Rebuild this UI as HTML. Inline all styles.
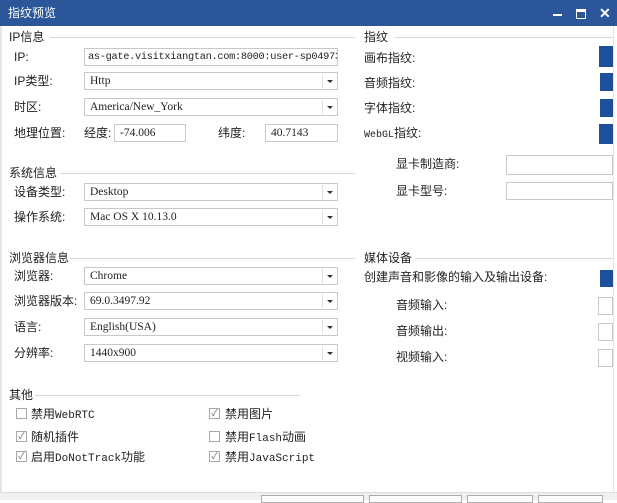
<!DOCTYPE html>
<html><head><meta charset="utf-8"><style>
*{margin:0;padding:0;box-sizing:border-box}
body{width:617px;height:500px;position:relative;overflow:hidden;background:#fff;font-family:"Liberation Sans","Noto Sans CJK SC",sans-serif;font-size:12px;color:#222}
.a{position:absolute;white-space:nowrap}
.t{position:absolute;white-space:nowrap;line-height:14px}
.mono{font-family:"Liberation Mono","Noto Sans CJK SC",monospace;font-size:11px}
.in{position:absolute;border:1px solid #c8c8c8;background:#fff;height:18px;line-height:16px;padding-left:5px;font-family:"Liberation Serif","Noto Serif CJK SC",serif;font-size:11.5px;overflow:hidden;white-space:nowrap}
.sel .arr{position:absolute;right:1px;top:1px;width:14px;height:14px;border-left:1px solid #e0e0e0}
.sel .arr:after{content:"";position:absolute;left:4px;top:6px;border-left:3px solid transparent;border-right:3px solid transparent;border-top:3px solid #333}
.ln{position:absolute;height:1px;background:#d8d8d8}
.sq{position:absolute;background:#1d4f9a}
.cb{position:absolute;width:11px;height:11px;border:1px solid #a8a8a8;background:#fff;font-size:9px;line-height:9px;text-align:center;color:#666}
.btn{position:absolute;top:495px;height:8px;border:1px solid #adadad;background:#fdfdfd}
</style></head><body>
<div class="a" style="left:0;top:0;width:617px;height:26px;background:#2b579a"></div>
<div class="t" style="left:8px;top:6px;color:#fff;font-size:12px">指纹预览</div>
<div class="a" style="left:553px;top:14px;width:9px;height:2px;background:#fff"></div>
<div class="a" style="left:576px;top:9px;width:10px;height:10px;border:1.5px solid #fff;border-top-width:3px"></div>
<div class="t" style="left:599px;top:6px;color:#fff;font-size:14px;font-weight:bold">✕</div>
<div class="a" style="left:0;top:26px;width:2px;height:470px;background:#e6e6e6"></div>
<div class="a" style="left:613px;top:26px;width:1px;height:470px;background:#e6e6e6"></div>

<div class="t" style="left:9px;top:30px">IP信息</div>
<div class="ln" style="left:50px;top:37px;width:305px"></div>
<div class="t" style="left:14px;top:50px">IP:</div>
<div class="in" style="left:84px;top:48px;width:254px;font-family:'Liberation Mono',monospace;font-size:10.3px;letter-spacing:-0.3px;padding-left:3px">as-gate.visitxiangtan.com:8000:user-sp04973090-c</div>
<div class="t" style="left:14px;top:74px">IP类型:</div>
<div class="in sel" style="left:84px;top:72px;width:254px">Http<span class="arr"></span></div>
<div class="t" style="left:14px;top:100px">时区:</div>
<div class="in sel" style="left:84px;top:98px;width:254px">America/New_York<span class="arr"></span></div>
<div class="t" style="left:14px;top:126px">地理位置:</div>
<div class="t" style="left:84px;top:126px">经度:</div>
<div class="in" style="left:114px;top:124px;width:72px">-74.006</div>
<div class="t" style="left:218px;top:126px">纬度:</div>
<div class="in" style="left:265px;top:124px;width:73px">40.7143</div>

<div class="t" style="left:9px;top:166px">系统信息</div>
<div class="ln" style="left:60px;top:173px;width:295px"></div>
<div class="t" style="left:14px;top:185px">设备类型:</div>
<div class="in sel" style="left:84px;top:183px;width:254px">Desktop<span class="arr"></span></div>
<div class="t" style="left:14px;top:210px">操作系统:</div>
<div class="in sel" style="left:84px;top:208px;width:254px">Mac OS X 10.13.0<span class="arr"></span></div>

<div class="t" style="left:9px;top:251px">浏览器信息</div>
<div class="ln" style="left:70px;top:258px;width:285px"></div>
<div class="t" style="left:14px;top:269px">浏览器:</div>
<div class="in sel" style="left:84px;top:267px;width:254px">Chrome<span class="arr"></span></div>
<div class="t" style="left:14px;top:294px">浏览器版本:</div>
<div class="in sel" style="left:84px;top:292px;width:254px">69.0.3497.92<span class="arr"></span></div>
<div class="t" style="left:14px;top:320px">语言:</div>
<div class="in sel" style="left:84px;top:318px;width:254px">English(USA)<span class="arr"></span></div>
<div class="t" style="left:14px;top:346px">分辨率:</div>
<div class="in sel" style="left:84px;top:344px;width:254px">1440x900<span class="arr"></span></div>

<div class="t" style="left:9px;top:388px">其他</div>
<div class="ln" style="left:35px;top:395px;width:265px"></div>
<div class="cb" style="left:16px;top:408px"></div><div class="t mono" style="left:31px;top:407px"><span style="font-size:12px;font-family:'Noto Sans CJK SC'">禁用</span>WebRTC</div>
<div class="cb" style="left:16px;top:431px">✓</div><div class="t" style="left:31px;top:430px">随机插件</div>
<div class="cb" style="left:16px;top:451px">✓</div><div class="t mono" style="left:31px;top:450px"><span style="font-size:12px;font-family:'Noto Sans CJK SC'">启用</span>DoNotTrack<span style="font-size:12px;font-family:'Noto Sans CJK SC'">功能</span></div>
<div class="cb" style="left:209px;top:408px">✓</div><div class="t" style="left:225px;top:407px">禁用图片</div>
<div class="cb" style="left:209px;top:431px"></div><div class="t mono" style="left:225px;top:430px"><span style="font-size:12px;font-family:'Noto Sans CJK SC'">禁用</span>Flash<span style="font-size:12px;font-family:'Noto Sans CJK SC'">动画</span></div>
<div class="cb" style="left:209px;top:451px">✓</div><div class="t mono" style="left:225px;top:450px"><span style="font-size:12px;font-family:'Noto Sans CJK SC'">禁用</span>JavaScript</div>

<div class="t" style="left:364px;top:30px">指纹</div>
<div class="ln" style="left:395px;top:37px;width:218px"></div>
<div class="t" style="left:364px;top:51px">画布指纹:</div><div class="sq" style="left:599px;top:46px;width:14px;height:21px"></div>
<div class="t" style="left:364px;top:76px">音频指纹:</div><div class="sq" style="left:600px;top:73px;width:13px;height:18px"></div>
<div class="t" style="left:364px;top:101px">字体指纹:</div><div class="sq" style="left:600px;top:99px;width:13px;height:18px"></div>
<div class="t" style="left:364px;top:126px"><span class="mono" style="font-size:10px">WebGL</span>指纹:</div><div class="sq" style="left:599px;top:124px;width:14px;height:20px"></div>
<div class="t" style="left:396px;top:157px">显卡制造商:</div>
<div class="in" style="left:506px;top:155px;width:107px;height:20px"></div>
<div class="t" style="left:396px;top:184px">显卡型号:</div>
<div class="in" style="left:506px;top:182px;width:107px;height:18px"></div>

<div class="t" style="left:364px;top:251px">媒体设备</div>
<div class="ln" style="left:415px;top:258px;width:198px"></div>
<div class="t" style="left:364px;top:270px">创建声音和影像的输入及输出设备:</div><div class="sq" style="left:600px;top:270px;width:13px;height:17px"></div>
<div class="t" style="left:396px;top:298px">音频输入:</div><div class="in" style="left:598px;top:297px;width:15px"></div>
<div class="t" style="left:396px;top:324px">音频输出:</div><div class="in" style="left:598px;top:323px;width:15px"></div>
<div class="t" style="left:396px;top:350px">视频输入:</div><div class="in" style="left:598px;top:349px;width:15px"></div>

<div class="a" style="left:0;top:492px;width:617px;height:8px;background:#f0f0f0;border-top:1px solid #dcdcdc"></div>
<div class="btn" style="left:261px;width:103px"></div>
<div class="btn" style="left:369px;width:93px"></div>
<div class="btn" style="left:467px;width:66px"></div>
<div class="btn" style="left:538px;width:65px"></div>
</body></html>
